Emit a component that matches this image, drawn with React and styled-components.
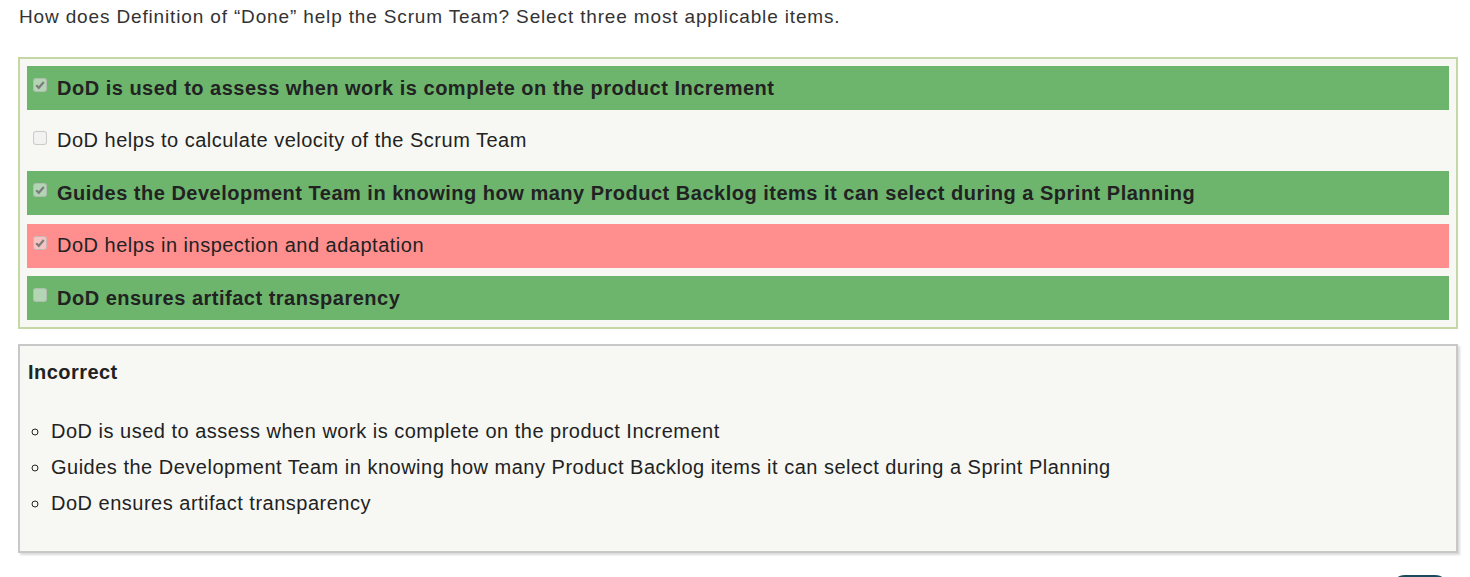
import React from 'react';
import styled, { createGlobalStyle } from 'styled-components';

const options = [
    { text: 'DoD is used to assess when work is complete on the product Increment', checked: true, state: 'right' },
    { text: 'DoD helps to calculate velocity of the Scrum Team', checked: false, state: 'none' },
    { text: 'Guides the Development Team in knowing how many Product Backlog items it can select during a Sprint Planning', checked: true, state: 'right' },
    { text: 'DoD helps in inspection and adaptation', checked: true, state: 'wrong' },
    { text: 'DoD ensures artifact transparency', checked: false, state: 'right' }
];

const correct = options.filter(o => o.state === 'right');

const rowBg = {
    right: '#6db56d',
    wrong: '#ff8f8f',
    none: 'transparent'
};

const Check = ({ checked }) => (
    <Box>
        {checked && (
            <svg width="12" height="12" viewBox="0 0 12 12">
                <path d="M2.2 6.2 L4.8 8.8 L9.8 3" fill="none" stroke="#7c7c7c" strokeWidth="2.2" />
            </svg>
        )}
    </Box>
);

const App = () => (
    <>
        <GlobalStyle />
        <Page>
            <Question>How does Definition of “Done” help the Scrum Team? Select three most applicable items.</Question>
            <Options>
                {options.map(o => (
                    <Option key={o.text} $state={o.state}>
                        <Check checked={o.checked} />
                        <span>{o.text}</span>
                    </Option>
                ))}
            </Options>
            <Feedback>
                <Verdict>Incorrect</Verdict>
                <Answers>
                    {correct.map(o => <li key={o.text}>{o.text}</li>)}
                </Answers>
            </Feedback>
            <Footer>
                <NextButton />
            </Footer>
        </Page>
    </>
);

export default App;

const GlobalStyle = createGlobalStyle`
    body {
        margin: 0;
        background: #fff;
        font-family: "Liberation Sans", Arial, sans-serif;
        color: #333;
        overflow: hidden;
    }
`;

const Page = styled.div`
    padding: 5px 12px 0 18px;
`;

const Question = styled.p`
    margin: 0 0 28px 1px;
    font-size: 19px;
    letter-spacing: 0.85px;
    line-height: 24px;
`;

const Options = styled.div`
    display: flex;
    flex-direction: column;
    gap: 8.5px;
    padding: 7px;
    border: 2px solid #c6d7a6;
    background: #f7f8f4;
`;

const Option = styled.div`
    display: flex;
    align-items: center;
    gap: 10px;
    height: 44px;
    padding: 0 6px;
    background: ${p => rowBg[p.$state]};
    font-size: 20px;
    letter-spacing: 0.5px;
    font-weight: ${p => (p.$state === 'right' ? 'bold' : 'normal')};
    color: #222;
`;

const Box = styled.span`
    display: flex;
    align-items: center;
    justify-content: center;
    width: 14px;
    height: 14px;
    margin-top: -6px;
    border: 1px solid rgba(170, 170, 170, 0.55);
    border-radius: 3px;
    background: rgba(238, 238, 238, 0.55);
    box-sizing: border-box;
    flex-shrink: 0;
`;

const Feedback = styled.div`
    margin-top: 15px;
    padding: 14px 8px 30px;
    border: 2px solid #c8c8c8;
    background: #f7f8f4;
    box-shadow: 2px 2px 2px rgba(0, 0, 0, 0.15);
`;

const Verdict = styled.div`
    font-size: 20px;
    letter-spacing: 0.45px;
    font-weight: bold;
    line-height: 24px;
    color: #222;
    margin-bottom: 29px;
`;

const Answers = styled.ul`
    margin: 0;
    padding-left: 23px;
    list-style: circle;
    font-size: 20px;
    letter-spacing: 0.5px;
    line-height: 36px;
    color: #222;
`;

const Footer = styled.div`
    display: flex;
    justify-content: flex-end;
    padding: 22px 9px 0 0;
`;

const NextButton = styled.div`
    width: 58px;
    height: 30px;
    border-radius: 14px;
    background: #1b4a5e;
`;
